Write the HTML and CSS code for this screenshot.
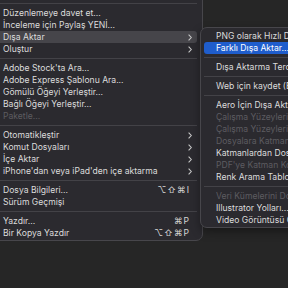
FILE: index.html
```html
<!DOCTYPE html>
<html lang="tr">
  <head>
    <meta charset="UTF-8" />
    <title>Dosya menüsü</title>
    <link rel="stylesheet" href="styles.css">
  </head>
  <body>

    <div class="menu main">
      <div class="sep"></div>
      <div class="item">Düzenlemeye davet et...</div>
      <div class="item">İnceleme için Paylaş YENİ...</div>
      <div class="item open">Dışa Aktar <svg class="chev" viewBox="0 0 4 7"><polyline points="0.6,0.6 3.3,3.5 0.6,6.4" /></svg></div>
      <div class="item">Oluştur <svg class="chev" viewBox="0 0 4 7"><polyline points="0.6,0.6 3.3,3.5 0.6,6.4" /></svg></div>
      <div class="sep"></div>
      <div class="item">Adobe Stock'ta Ara...</div>
      <div class="item">Adobe Express Şablonu Ara...</div>
      <div class="item">Gömülü Öğeyi Yerleştir...</div>
      <div class="item">Bağlı Öğeyi Yerleştir...</div>
      <div class="item off">Paketle...</div>
      <div class="sep"></div>
      <div class="item">Otomatikleştir <svg class="chev" viewBox="0 0 4 7"><polyline points="0.6,0.6 3.3,3.5 0.6,6.4" /></svg></div>
      <div class="item">Komut Dosyaları <svg class="chev" viewBox="0 0 4 7"><polyline points="0.6,0.6 3.3,3.5 0.6,6.4" /></svg></div>
      <div class="item">İçe Aktar <svg class="chev" viewBox="0 0 4 7"><polyline points="0.6,0.6 3.3,3.5 0.6,6.4" /></svg></div>
      <div class="item">iPhone'dan veya iPad'den içe aktarma <svg class="chev" viewBox="0 0 4 7"><polyline points="0.6,0.6 3.3,3.5 0.6,6.4" /></svg></div>
      <div class="sep"></div>
      <div class="item">Dosya Bilgileri... <span class="keys">⌥⇧⌘I</span></div>
      <div class="item">Sürüm Geçmişi</div>
      <div class="sep"></div>
      <div class="item">Yazdır... <span class="keys">⌘P</span></div>
      <div class="item">Bir Kopya Yazdır <span class="keys">⌥⇧⌘P</span></div>
    </div>

    <div class="menu sub">
      <div class="item">PNG olarak Hızlı Dışa Aktar</div>
      <div class="item active">Farklı Dışa Aktar...</div>
      <div class="sep"></div>
      <div class="item">Dışa Aktarma Tercihleri...</div>
      <div class="sep"></div>
      <div class="item">Web için kaydet (Eski)...</div>
      <div class="sep"></div>
      <div class="item">Aero İçin Dışa Aktar</div>
      <div class="item off">Çalışma Yüzeylerini Dosyalara...</div>
      <div class="item off">Çalışma Yüzeylerini PDF'ye...</div>
      <div class="item off">Dosyalara Katman Kompozisyonları...</div>
      <div class="item">Katmanlardan Dosyalara...</div>
      <div class="item off">PDF'ye Katman Kompozisyonları...</div>
      <div class="item">Renk Arama Tabloları...</div>
      <div class="sep"></div>
      <div class="item off">Veri Kümelerini Dosyalara...</div>
      <div class="item">Illustrator Yolları...</div>
      <div class="item">Video Görüntüsü Oluştur...</div>
    </div>

  </body>
</html>
```

FILE: styles.css
```css
*{
  margin: 0;
  padding: 0;
  box-sizing: border-box;
}

body{
  width: 288px;
  height: 288px;
  overflow: hidden;
  position: relative;
  background-color: #262626;
  font-family: "Inter", "DejaVu Sans", sans-serif;
  font-size: 8.6px;
  color: #dcdcdc;
}

.menu{
  background-color: #2b2a2f;
  border: 1px solid #47464b;
}

.main{
  width: 215px;
  margin-left: -12px;
  margin-top: -1px;
  padding: 0 5px 1px;
  border-radius: 0 0 7px 0;
}

.sub{
  position: absolute;
  left: 200px;
  top: 27px;
  width: 130px;
  padding: 2px 3px 1px;
  border-radius: 7px;
  box-shadow: 0 4px 10px rgba(0, 0, 0, 0.35);
}

.item{
  height: 12px;
  display: flex;
  align-items: center;
  white-space: nowrap;
  padding: 0 3px 0 9px;
  border-radius: 3px;
}

.sub .item{
  padding-left: 12px;
}

.item.open{
  background-color: #46454a;
}

.item.active{
  background-color: #1f5dcc;
  color: #ffffff;
}

.item.off{
  color: #5d5c61;
}

.chev{
  width: 4px;
  height: 7px;
  margin-left: auto;
  margin-right: 2px;
}

.chev polyline{
  fill: none;
  stroke: #c9c9c9;
  stroke-width: 1.1;
}

.keys{
  margin-left: auto;
  margin-right: 4px;
  letter-spacing: 1px;
  color: #d6d6d6;
}

.sep{
  height: 7px;
  position: relative;
}

.sep::before{
  content: "";
  position: absolute;
  left: 0;
  right: 0;
  top: 3px;
  height: 1px;
  background-color: #434247;
}
```
